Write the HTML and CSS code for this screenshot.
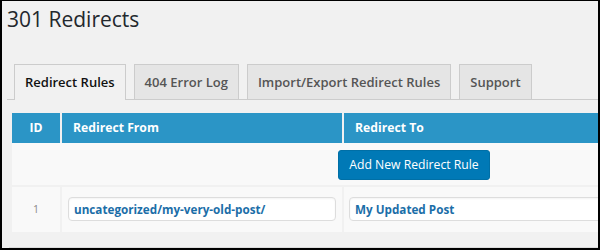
FILE: index.html
```html
<!DOCTYPE html>
<html lang="en">
<head>
<meta charset="utf-8">
<title>301 Redirects</title>
<link rel="stylesheet" href="styles.css">
</head>
<body>
<div class="frame">
  <div class="wrap">
    <h1 class="title">301 Redirects</h1>
    <nav class="tabs">
      <a class="tab active">Redirect Rules</a>
      <a class="tab">404 Error Log</a>
      <a class="tab">Import/Export Redirect Rules</a>
      <a class="tab">Support</a>
    </nav>
    <table class="rules">
      <thead>
        <tr>
          <th class="c-id">ID</th>
          <th class="c-from">Redirect From</th>
          <th class="c-to">Redirect To</th>
        </tr>
      </thead>
      <tbody>
        <tr class="add-row">
          <td colspan="3"><button class="btn-primary" type="button">Add New Redirect Rule</button></td>
        </tr>
        <tr class="rule">
          <td class="c-id id-num">1</td>
          <td class="c-from"><input class="field" type="text" value="uncategorized/my-very-old-post/"></td>
          <td class="c-to to-cell"><input class="field" type="text" value="My Updated Post"></td>
        </tr>
      </tbody>
    </table>
    <div class="next-box"></div>
  </div>
</div>
</body>
</html>
```

FILE: styles.css
```css
html, body {
  margin: 0;
  padding: 0;
}

body {
  font-family: "Open Sans", "Noto Sans", sans-serif;
  background: #f1f1f1;
}

.frame {
  box-sizing: border-box;
  width: 600px;
  height: 250px;
  border-style: solid;
  border-color: #000;
  border-width: 1px 2px 2px 2px;
  background: #f1f1f1;
  overflow: hidden;
}

.wrap {
  padding-left: 5px;
}

.title {
  margin: 4px 0 0 0;
  font-size: 21px;
  font-weight: 400;
  line-height: 29px;
  color: #23282d;
}

.tabs {
  display: flex;
  align-items: flex-end;
  margin-top: 30px;
  padding-left: 7px;
  border-bottom: 1px solid #ccc;
}

.tab {
  display: block;
  margin-left: 8px;
  padding: 5px 10px;
  border: 1px solid #ccc;
  border-bottom: 0;
  background: #e5e5e5;
  color: #555;
  font-size: 13px;
  font-weight: 600;
  line-height: 24px;
  white-space: nowrap;
}

.tab:first-child {
  margin-left: 0;
}

.tab.active {
  background: #f1f1f1;
  color: #111;
  padding-bottom: 6px;
  margin-bottom: -1px;
}

.rules {
  margin: 13px 0 0 5px;
  width: 804px;
  table-layout: fixed;
  border-collapse: separate;
  border-spacing: 0;
}

.rules th,
.rules td {
  box-sizing: border-box;
  padding: 0;
}

.rules th {
  height: 30px;
  background: #2b95c6;
  color: #fff;
  font-size: 12.2px;
  font-weight: 700;
  line-height: 30px;
  text-align: left;
  padding-left: 11px;
}

.rules th.c-id {
  text-align: center;
  padding-left: 0;
}

.c-id {
  width: 50px;
  border-right: 2px solid #f1f1f1;
}

.c-from {
  width: 282px;
  border-right: 2px solid #f1f1f1;
}

.c-to {
  width: 472px;
}

.add-row td {
  background: #f9f9f9;
  text-align: center;
  padding: 7px 0 5px 0;
  border-bottom: 2px solid #f1f1f1;
}

.btn-primary {
  height: 30px;
  padding: 0 10px;
  border: 1px solid #006fa6;
  border-radius: 3px;
  background: #0079b6;
  color: #fff;
  font-family: "Open Sans", "Noto Sans", sans-serif;
  font-size: 12.2px;
  line-height: 28px;
  vertical-align: top;
}

.rule td {
  background: #f9f9f9;
  padding: 10px 6px 11px 6px;
  vertical-align: top;
}

.rule td.to-cell {
  padding-left: 5px;
}

.rule td.id-num {
  text-align: center;
  color: #888;
  font-size: 10.5px;
  line-height: 24px;
}

.field {
  display: block;
  box-sizing: border-box;
  width: 100%;
  height: 24px;
  margin: 0;
  padding: 0 5px;
  border: 1px solid #ddd;
  border-radius: 4px;
  background: #fff;
  box-shadow: inset 0 1px 2px rgba(0, 0, 0, 0.05);
  color: #1b6ea8;
  font-family: "Open Sans", "Noto Sans", sans-serif;
  font-size: 11.7px;
  font-weight: 700;
}

.next-box {
  margin: 15px 0 0 2px;
  border-top: 1px solid #dcdcdc;
  height: 10px;
}
```
